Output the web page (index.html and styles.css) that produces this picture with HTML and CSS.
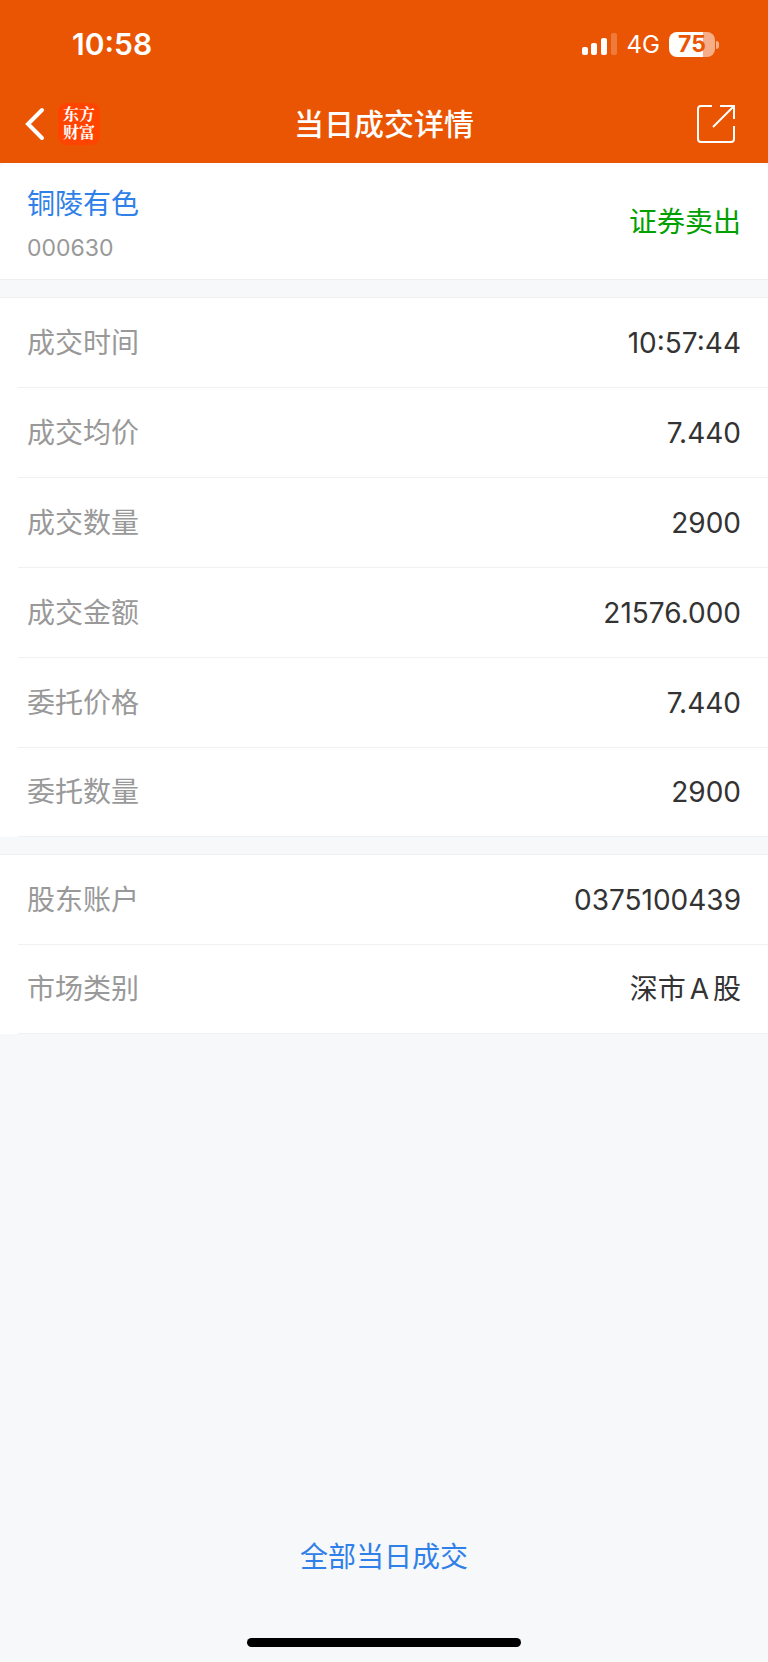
FILE: index.html
```html
<!DOCTYPE html>
<html lang="zh-CN">
<head>
<meta charset="utf-8">
<meta name="viewport" content="width=device-width, initial-scale=1">
<title>当日成交详情</title>
<link rel="stylesheet" href="styles.css">
</head>
<body>
<header class="top">
  <div class="status">
    <span class="clock">10:58</span>
    <div class="indicators">
      <svg class="signal" viewBox="0 0 36 24" aria-hidden="true">
        <rect x="0" y="15" width="6" height="8" rx="2"/>
        <rect x="9" y="11" width="6" height="12" rx="2"/>
        <rect x="19" y="6" width="6" height="17" rx="2"/>
        <rect x="29" y="1" width="6" height="22" rx="2" opacity=".22"/>
      </svg>
      <span class="network">4G</span>
      <span class="battery"><span class="battery-level">75</span></span>
    </div>
  </div>
  <nav class="nav">
    <div class="nav-left">
      <button class="icon-button" type="button" aria-label="返回">
        <svg class="back" viewBox="0 0 20 34"><path d="M17 3 3 17 17 31"/></svg>
      </button>
      <span class="logo">东方<br>财富</span>
    </div>
    <h1 class="title">当日成交详情</h1>
    <button class="icon-button icon-button-end" type="button" aria-label="分享">
      <svg class="share" viewBox="0 0 38 38"><path d="M15 1H4Q1 1 1 4V34Q1 37 4 37H34Q37 37 37 34V21M23 1H37V14M37 1 16 22"/></svg>
    </button>
  </nav>
</header>
<main class="content">
  <section class="summary">
    <div class="stock">
      <a class="stock-name" href="#">铜陵有色</a>
      <div class="stock-code">000630</div>
    </div>
    <span class="direction">证券卖出</span>
  </section>
  <dl class="details">
    <div class="row"><dt>成交时间</dt><dd>10:57:44</dd></div>
    <div class="row"><dt>成交均价</dt><dd>7.440</dd></div>
    <div class="row"><dt>成交数量</dt><dd>2900</dd></div>
    <div class="row"><dt>成交金额</dt><dd>21576.000</dd></div>
    <div class="row"><dt>委托价格</dt><dd>7.440</dd></div>
    <div class="row"><dt>委托数量</dt><dd>2900</dd></div>
  </dl>
  <dl class="details">
    <div class="row"><dt>股东账户</dt><dd>0375100439</dd></div>
    <div class="row"><dt>市场类别</dt><dd>深市<span class="market">A</span>股</dd></div>
  </dl>
</main>
<footer class="bottom">
  <a class="all-trades" href="#">全部当日成交</a>
  <div class="home-bar"></div>
</footer>
</body>
</html>
```

FILE: styles.css
```css
* {
  box-sizing: border-box;
}

body {
  margin: 0;
  min-height: 100vh;
  display: flex;
  flex-direction: column;
  background: #f7f8fa;
  color: #333;
  font-family: Inter, "Noto Sans CJK SC", sans-serif;
  font-size: 28px;
  line-height: 40px;
}

a {
  color: #2f80e8;
  text-decoration: none;
}

.top {
  background: #ea5504;
  color: #fff;
}

.status {
  display: flex;
  align-items: center;
  justify-content: space-between;
  height: 86px;
  padding: 2px 50px 0 72px;
}

.clock {
  font-size: 30px;
  font-weight: 600;
}

.indicators {
  display: flex;
  align-items: center;
  gap: 9px;
}

.signal {
  width: 36px;
  height: 24px;
  fill: #fff;
}

.network {
  padding-top: 2px;
  font-size: 24px;
}

.battery {
  position: relative;
  width: 46px;
  height: 25px;
  margin-right: 3px;
  border-radius: 8px;
  background: linear-gradient(to right, #fff 75%, #f5ae87 75%);
  color: #ea5504;
  font-size: 23px;
  font-weight: 700;
  line-height: 25px;
  text-align: center;
}

.battery::after {
  content: "";
  position: absolute;
  top: 9px;
  right: -4px;
  width: 3px;
  height: 8px;
  border-radius: 0 4px 4px 0;
  background: #f5ae87;
}

.nav {
  display: grid;
  grid-template-columns: 1fr auto 1fr;
  align-items: center;
  height: 77px;
  padding: 0 25px 1px;
}

.nav-left {
  display: flex;
  align-items: center;
  gap: 13px;
}

.icon-button {
  display: flex;
  padding: 0;
  border: 0;
  background: none;
}

.icon-button-end {
  justify-self: end;
  margin-right: 8px;
}

.back,
.share {
  fill: none;
  stroke: #fff;
}

.back {
  width: 20px;
  height: 34px;
  stroke-width: 4;
  stroke-linecap: round;
}

.share {
  width: 38px;
  height: 38px;
  stroke-width: 2;
}

.logo {
  width: 42px;
  height: 42px;
  padding-top: 2px;
  border-radius: 9px;
  background: #ff4400;
  font-family: "Noto Serif CJK SC", "Noto Sans CJK SC", serif;
  font-size: 16px;
  font-weight: 700;
  line-height: 18px;
  text-align: center;
}

.title {
  margin: 0;
  font-size: 30px;
  font-weight: 500;
}

.content {
  display: flex;
  flex-direction: column;
  gap: 17px;
}

.summary {
  display: flex;
  align-items: center;
  justify-content: space-between;
  height: 117px;
  padding: 2px 27px 0;
  border-bottom: 1px solid #eeeff1;
  border-radius: 6px 6px 0 0;
  background: #fff;
}

.stock {
  padding-top: 8px;
}

.stock-name {
  display: block;
  line-height: 44px;
}

.stock-code {
  color: #999;
  font-size: 23px;
  line-height: 44px;
}

.direction {
  color: #00a000;
}

.details {
  margin: 0;
  padding-left: 18px;
  border-top: 1px solid #eeeff1;
  background: #fff;
}

.row {
  display: flex;
  align-items: center;
  justify-content: space-between;
  height: 90px;
  padding: 0 27px 0 9px;
  border-bottom: 1px solid #f1f1f1;
}

.row:last-child {
  height: 89px;
}

.row dt {
  color: #999;
}

.row dd {
  margin: 0;
}

.market {
  margin: 0 4px;
}

.bottom {
  display: flex;
  flex-direction: column;
  align-items: center;
  gap: 61px;
  margin-top: auto;
  padding-bottom: 15px;
}

.home-bar {
  width: 274px;
  height: 9px;
  border-radius: 5px;
  background: #000;
}
```
